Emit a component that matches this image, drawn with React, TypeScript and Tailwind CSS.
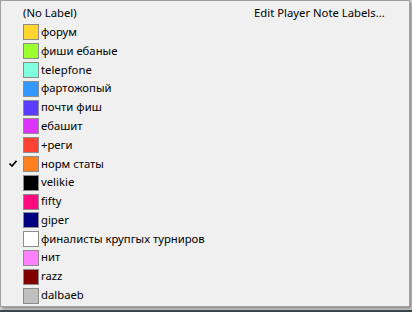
const labels: { name: string; color: string; checked?: boolean }[] = [
  { name: "форум", color: "bg-[#ffd62e]" },
  { name: "фиши ебаные", color: "bg-[#9cff2e]" },
  { name: "telepfone", color: "bg-[#80ffdf]" },
  { name: "фартожопый", color: "bg-[#3399ff]" },
  { name: "почти фиш", color: "bg-[#5b3cff]" },
  { name: "ебашит", color: "bg-[#dd33ff]" },
  { name: "+реги", color: "bg-[#ff4233]" },
  { name: "норм статы", color: "bg-[#ff8020]", checked: true },
  { name: "velikie", color: "bg-[#000000]" },
  { name: "fifty", color: "bg-[#ff0a7f]" },
  { name: "giper", color: "bg-[#000080]" },
  { name: "финалисты крупгых турниров", color: "bg-[#ffffff]" },
  { name: "нит", color: "bg-[#ff80ff]" },
  { name: "razz", color: "bg-[#800000]" },
  { name: "dalbaeb", color: "bg-[#c0c0c0]" },
];

function Check() {
  return (
    <svg width="8" height="7" viewBox="0 0 8 7" className="block">
      <path d="M0.5 3.5 L3 6 L7.5 0.8" fill="none" stroke="#000" strokeWidth="1.6" />
    </svg>
  );
}

export default function App() {
  return (
    <div className="relative h-[312px] w-[412px] overflow-hidden bg-[#3b4a50] font-['Noto_Sans',sans-serif] text-[11.3px] text-black">
      <div className="flex h-[310px] w-[412px] flex-col bg-[#d8d8d8]">
        <div className="flex h-[307px] w-[410px] border border-[#a0a0a0] bg-[#f0f0f0] shadow-[2px_2px_3px_rgba(0,0,0,0.35)]">
          <div className="flex w-[240px] flex-col pt-[3px]">
            <div className="flex h-[19px] items-center pl-[22px]">(No Label)</div>
            {labels.map((l) => (
              <div key={l.name} className="flex h-[18.8px] items-center">
                <div className="flex w-[22px] justify-center pl-[2px]">{l.checked && <Check />}</div>
                <div className={`h-4 w-4 border border-[#8c8c8c] ${l.color}`} />
                <span className="ml-[2px] whitespace-nowrap">{l.name}</span>
              </div>
            ))}
          </div>
          <div className="flex flex-col pt-[3px] pl-[13px]">
            <div className="flex h-[19px] items-center whitespace-nowrap">Edit Player Note Labels...</div>
          </div>
        </div>
      </div>
    </div>
  );
}
